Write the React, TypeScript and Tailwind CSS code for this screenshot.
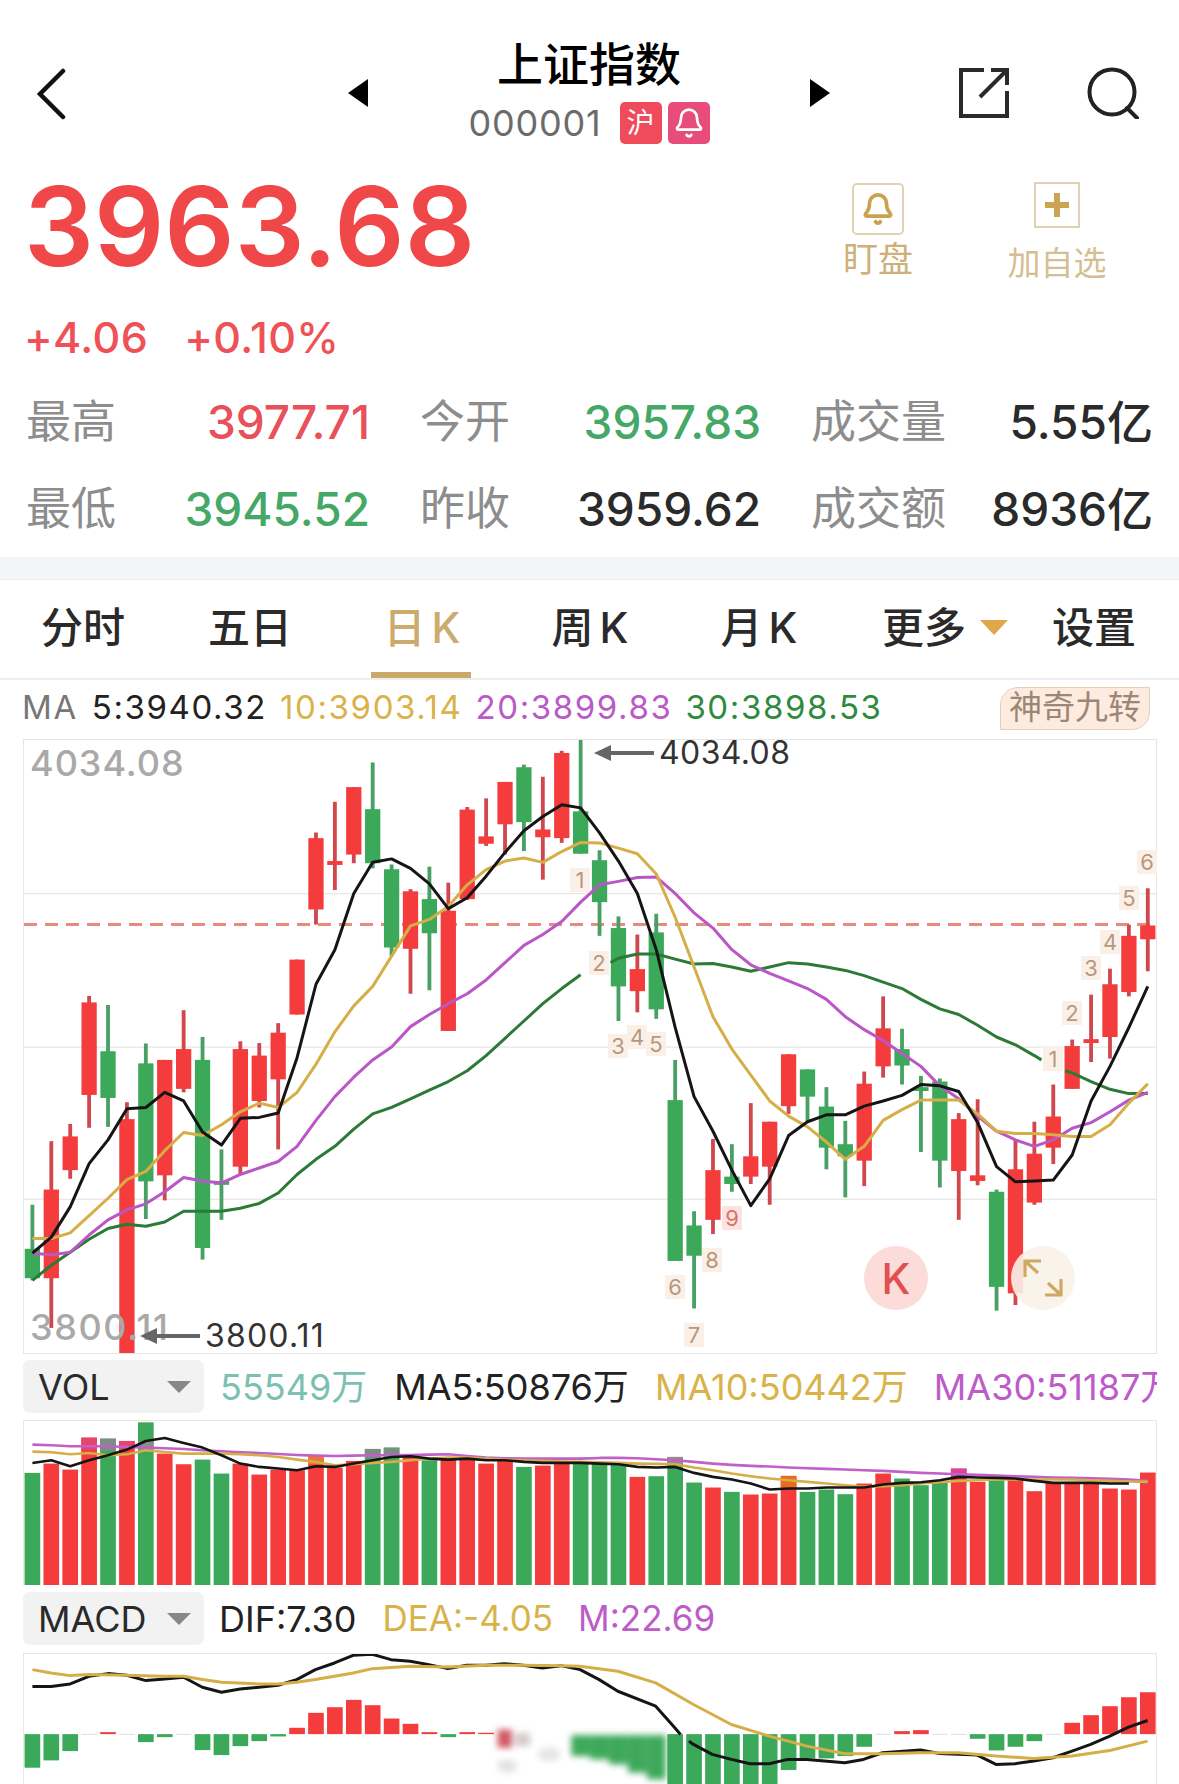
import { Bell } from 'lucide-react';

const RED = '#f43c3c';
const GREEN = '#3ca85a';
const BLACK = '#151515';
const GOLD = '#d6ae48';
const PURPLE = '#b957c6';
const DARK_GREEN = '#2b7a35';

// chart data is kept in a shared horizontal unit, one candle is 49.5 wide
const cx = (i: number) => 82 + 49.5 * i;
const line = (ys: number[], start = 0) => ys.map((y, i) => `${cx(i + start)},${y}`).join(' ');

// color, body top, body bottom, wick top, wick bottom
const CANDLES: [string, number, number, number, number][] = [
  ['g', 1312, 1380, 1210, 1385], ['r', 1175, 1380, 1063, 1495], ['r', 1052, 1130, 1023, 1150], ['r', 742, 956, 727, 1032],
  ['g', 855, 963, 748, 1030], ['r', 1012, 1553, 973, 1553], ['g', 883, 1156, 837, 1243], ['r', 875, 1142, 875, 1200],
  ['r', 850, 942, 760, 950], ['g', 875, 1310, 822, 1337], ['g', 1155, 1162, 1082, 1245], ['r', 850, 1122, 832, 1140],
  ['r', 865, 970, 836, 985], ['r', 812, 920, 790, 1082], ['r', 643, 770, 643, 770], ['r', 362, 527, 349, 562],
  ['r', 415, 420, 278, 482], ['r', 244, 400, 244, 420], ['g', 295, 420, 187, 432], ['g', 434, 615, 423, 635],
  ['r', 485, 618, 480, 722], ['g', 503, 582, 428, 714], ['r', 530, 808, 465, 808], ['r', 296, 503, 290, 505],
  ['r', 358, 375, 270, 380], ['r', 232, 330, 232, 400], ['g', 198, 325, 192, 392], ['r', 342, 360, 220, 458],
  ['r', 165, 362, 160, 373], ['g', 300, 398, 135, 398], ['g', 413, 510, 390, 588], ['g', 570, 705, 543, 785],
  ['r', 665, 716, 585, 765], ['g', 580, 758, 537, 780], ['g', 968, 1340, 875, 1340], ['g', 1258, 1328, 1225, 1450],
  ['r', 1130, 1245, 1058, 1278], ['g', 1145, 1162, 1070, 1180], ['r', 1098, 1145, 975, 1162], ['r', 1018, 1122, 1018, 1210],
  ['r', 862, 982, 862, 1000], ['g', 897, 960, 897, 1020], ['g', 983, 1078, 938, 1128], ['g', 1070, 1098, 1016, 1193],
  ['r', 930, 1108, 902, 1167], ['r', 802, 890, 728, 916], ['g', 850, 888, 803, 932], ['g', 938, 943, 912, 1088],
  ['g', 925, 1108, 918, 1170], ['r', 1012, 1132, 998, 1245], ['r', 1142, 1155, 966, 1165], ['g', 1180, 1400, 1175, 1455],
  ['r', 1128, 1415, 1058, 1442], ['r', 1092, 1205, 1018, 1210], ['r', 1006, 1078, 932, 1116], ['r', 843, 942, 828, 942],
  ['r', 827, 832, 724, 880], ['r', 700, 822, 664, 872], ['r', 588, 718, 562, 728], ['r', 564, 596, 478, 670],
];

const MA5 = [1322, 1285, 1215, 1115, 1060, 988, 985, 950, 970, 1042, 1072, 1010, 1008, 998, 870, 700, 620, 490, 418, 410, 432, 468, 525, 500, 450, 395, 345, 312, 285, 292, 350, 415, 490, 620, 800, 960, 1040, 1130, 1212, 1150, 1050, 1018, 1002, 1002, 982, 970, 957, 932, 935, 948, 1020, 1122, 1157, 1155, 1153, 1095, 970, 890, 800, 705];
const MA10 = [1288, 1288, 1275, 1235, 1195, 1152, 1133, 1085, 1043, 1050, 1025, 995, 975, 985, 950, 885, 810, 750, 705, 635, 565, 550, 520, 470, 435, 415, 408, 418, 393, 372, 373, 385, 398, 445, 545, 660, 775, 850, 910, 970, 1005, 1030, 1065, 1105, 1075, 1015, 990, 968, 968, 968, 1000, 1040, 1045, 1045, 1048, 1052, 1052, 1025, 975, 930];
const MA20 = [1322, 1326, 1320, 1280, 1245, 1222, 1208, 1180, 1147, 1155, 1160, 1140, 1125, 1110, 1075, 1015, 960, 915, 875, 845, 798, 770, 745, 722, 690, 650, 610, 585, 555, 510, 470, 462, 453, 452, 490, 535, 570, 620, 655, 675, 692, 710, 735, 775, 805, 830, 860, 890, 935, 965, 1005, 1040, 1060, 1075, 1060, 1033, 1020, 995, 968, 950];
const MA30_A = [1385, 1350, 1320, 1290, 1265, 1255, 1260, 1250, 1225, 1225, 1225, 1218, 1207, 1183, 1140, 1105, 1075, 1035, 1000, 985, 965, 945, 925, 900, 865, 825, 785, 745, 710, 678];
const MA30_B = [640, 630, 630, 642, 653, 652, 660, 670, 660, 650, 653, 660, 668, 680, 695, 710, 735, 757, 770, 795, 822, 840, 865];
const MA30_C = [905, 925, 943, 953, 953];

// volume bars: color + bar top
const VOL: [string, number][] = [
  ['g', 368], ['r', 340], ['r', 358], ['r', 262], ['g', 265], ['r', 272], ['g', 216], ['r', 310], ['r', 342], ['g', 328],
  ['g', 370], ['r', 340], ['r', 373], ['r', 358], ['r', 360], ['r', 318], ['r', 352], ['r', 332], ['g', 296], ['g', 292],
  ['r', 318], ['g', 330], ['r', 325], ['r', 325], ['r', 340], ['r', 325], ['g', 350], ['r', 346], ['r', 340], ['g', 340],
  ['g', 340], ['g', 342], ['r', 380], ['g', 378], ['g', 320], ['g', 397], ['r', 412], ['g', 425], ['r', 433], ['r', 430],
  ['r', 377], ['g', 425], ['g', 418], ['g', 432], ['r', 400], ['r', 370], ['g', 385], ['g', 405], ['g', 395], ['r', 355],
  ['r', 395], ['g', 390], ['r', 385], ['r', 423], ['r', 398], ['r', 395], ['r', 395], ['r', 415], ['r', 418], ['r', 367],
];
// bar tops that rise over the average lines look tinted in the app
const VOL_TINT: [number, number, number, string][] = [
  [3, 262, 300, '#e8436e'], [4, 265, 302, '#7d8d83'], [5, 272, 298, '#e8436e'], [6, 272, 298, '#84908a'], [15, 318, 342, '#f0762a'],
  [18, 296, 325, '#7d8d83'], [19, 292, 320, '#7d8d83'], [34, 320, 342, '#97898f'], [40, 377, 415, '#ea6a20'], [49, 355, 378, '#d9459a'],
];
const VOL_BLACK = [338, 330, 348, 330, 315, 298, 272, 263, 278, 292, 315, 340, 350, 355, 360, 348, 350, 340, 330, 320, 318, 325, 328, 325, 330, 330, 335, 338, 338, 338, 340, 342, 350, 352, 350, 368, 380, 388, 400, 418, 415, 415, 412, 412, 412, 403, 398, 396, 390, 380, 382, 383, 385, 392, 398, 398, 398, 400, 400];
const VOL_GOLD = [304, 306, 312, 308, 315, 312, 300, 305, 310, 310, 310, 312, 315, 320, 328, 335, 345, 342, 338, 335, 330, 325, 322, 322, 325, 328, 330, 332, 334, 335, 336, 338, 340, 341, 342, 352, 360, 370, 378, 385, 390, 395, 400, 405, 410, 408, 405, 400, 396, 392, 390, 388, 388, 388, 388, 388, 390, 392, 394, 395];
const VOL_PURPLE = [283, 285, 288, 288, 288, 290, 292, 294, 296, 300, 303, 306, 308, 311, 314, 316, 317, 316, 315, 315, 314, 313, 312, 317, 322, 324, 325, 325, 325, 325, 323, 323, 324, 327, 330, 335, 340, 344, 347, 349, 352, 354, 356, 358, 360, 362, 365, 368, 370, 372, 374, 376, 378, 380, 382, 383, 384, 386, 388, 392];

// macd: bar top/bottom around the zero line at 1149
const MACD: [string, number][] = [
  ['g', 1250], ['g', 1228], ['g', 1200], ['n', 1151], ['r', 1143], ['n', 1151], ['g', 1173], ['g', 1158], ['n', 1151], ['g', 1197],
  ['g', 1212], ['g', 1185], ['g', 1170], ['g', 1156], ['r', 1130], ['r', 1085], ['r', 1068], ['r', 1046], ['r', 1062], ['r', 1102],
  ['r', 1118], ['r', 1143], ['g', 1158], ['r', 1143], ['r', 1145], ['x', 0], ['x', 0], ['x', 0], ['x', 0], ['x', 0],
  ['x', 0], ['x', 0], ['x', 0], ['x', 0], ['g', 1310], ['g', 1310], ['g', 1310], ['g', 1310], ['g', 1310], ['g', 1310],
  ['g', 1257], ['g', 1222], ['g', 1222], ['g', 1215], ['g', 1187], ['n', 1151], ['r', 1140], ['r', 1137], ['n', 1151], ['n', 1151],
  ['g', 1163], ['g', 1198], ['g', 1187], ['g', 1170], ['n', 1151], ['r', 1115], ['r', 1092], ['r', 1065], ['r', 1038], ['r', 1023],
];
const MACD_BLUR = [[29, 1215], [30, 1225], [31, 1240], [32, 1265], [33, 1285]];
const DIF = '82,1006 131,1006 181,998 230,975 280,967 329,972 379,988 428,983 478,978 527,1008 577,1023 626,1013 675,1008 725,1002 774,985 823,955 873,935 922,912 972,909 1021,925 1071,930 1120,940 1170,952 1219,942 1269,942 1318,937 1367,942 1417,950 1466,943 1516,955 1566,985 1615,1020 1714,1065 1764,1130 1779,1150';
const DIF_2 = '1801,1170 1813,1180 1862,1210 1912,1225 1961,1238 2011,1238 2060,1225 2110,1225 2209,1235 2258,1225 2308,1205 2407,1197 2457,1207 2556,1212 2605,1240 2655,1238 2704,1230 2754,1220 2804,1200 2853,1180 2903,1155 2952,1128 3002,1108';
const DEA = '82,955 131,965 181,973 230,970 329,972 428,975 478,975 527,985 577,993 675,998 725,998 774,993 823,985 873,975 922,965 972,952 1071,945 1170,947 1269,942 1367,942 1466,943 1516,945 1615,960 1714,995 1813,1060 1912,1120 2011,1155 2110,1185 2209,1208 2308,1208 2407,1205 2506,1205 2605,1215 2704,1222 2804,1215 2903,1198 3002,1170';

const NINE: [string, number, number, boolean?][] = [
  ['1', 579, 879], ['2', 598, 962], ['3', 617, 1045], ['4', 636, 1036], ['5', 655, 1043], ['6', 674, 1286], ['7', 693, 1334],
  ['8', 711, 1259], ['9', 731, 1217, true], ['1', 1052, 1058], ['2', 1071, 1012], ['3', 1090, 967], ['4', 1109, 941], ['5', 1128, 897], ['6', 1146, 861],
];

const STATS = [
  [['最高', '3977.71', 'text-[#e8505a]'], ['今开', '3957.83', 'text-[#45a866]'], ['成交量', '5.55亿', 'text-[#2a2a2a]']],
  [['最低', '3945.52', 'text-[#45a866]'], ['昨收', '3959.62', 'text-[#2a2a2a]'], ['成交额', '8936亿', 'text-[#2a2a2a]']],
];

function Poly({ points, color, width = 3 }: { points: string; color: string; width?: number }) {
  return <polyline points={points} fill="none" stroke={color} strokeWidth={width} strokeLinejoin="round" vectorEffect="non-scaling-stroke" />;
}

function Caret() {
  return <span className="h-0 w-0 border-x-[12px] border-t-[12px] border-x-transparent border-t-[#888]" />;
}

function Arrow() {
  return (
    <svg width="60" height="16" viewBox="0 0 60 16" className="shrink-0">
      <path d="M0 8L17 0V6H60V10H17V16Z" fill="#666" />
    </svg>
  );
}

function CandleChart() {
  return (
    <div className="relative ml-[23px] h-[615px] w-[1134px] border border-[#e6e6e6]">
      <svg viewBox="60 135 2964 1418" preserveAspectRatio="none" className="block h-full w-full">
        {[490, 845, 1197].map(y => <rect key={y} x="60" y={y - 1} width="2964" height="3" fill="#e8e8e8" />)}
        <line x1="60" y1="562" x2="3024" y2="562" stroke="#e98b7c" strokeWidth="3" strokeDasharray="13 8" vectorEffect="non-scaling-stroke" />
        {CANDLES.map(([c, top, bottom, wickTop, wickBottom], i) => (
          <g key={i} fill={c === 'r' ? RED : GREEN}>
            <rect x={cx(i) - 5} y={wickTop} width="10" height={wickBottom - wickTop} fill={c === 'r' ? '#d0484e' : '#48a064'} />
            <rect x={cx(i) - 20} y={top} width="40" height={Math.max(bottom - top, 9)} />
          </g>
        ))}
        <Poly points={line(MA30_A)} color={DARK_GREEN} />
        <Poly points={`1596,650 ${line(MA30_B, 31)} 2724,875`} color={DARK_GREEN} />
        <Poly points={`2786,900 ${line(MA30_C, 55)}`} color={DARK_GREEN} />
        <Poly points={line(MA20)} color={PURPLE} />
        <Poly points={line(MA10)} color={GOLD} />
        <Poly points={line(MA5)} color={BLACK} />
      </svg>

      <span className="absolute left-[6px] top-[5px] text-[36px] leading-[36px] tracking-[1px] font-medium text-[#a9a9a9]">4034.08</span>
      <span className="absolute left-[6px] top-[569px] text-[36px] leading-[36px] tracking-[1.6px] font-medium text-[#a9a9a9]">3800.11</span>
      <div className="absolute left-[570px] top-[-3px] flex items-center gap-[5px] text-[32px] leading-[32px] tracking-[0.4px] text-[#333]">
        <Arrow />
        <span>4034.08</span>
      </div>
      <div className="absolute left-[116px] top-[580px] flex items-center gap-[5px] text-[32px] leading-[32px] tracking-[1.2px] text-[#333]">
        <Arrow />
        <span>3800.11</span>
      </div>

      {NINE.map(([n, x, y, hot], i) => (
        <span
          key={i}
          className={`absolute flex h-[24px] w-[20px] items-center justify-center text-[22px] ${hot ? 'bg-[#fbe3e0] text-[#d9706a]' : 'bg-[#fbf0e8] text-[#b8987c]'}`}
          style={{ left: x - 33, top: y - 751 }}
        >
          {n}
        </span>
      ))}

      <span className="absolute left-[840px] top-[506px] flex h-[64px] w-[64px] items-center justify-center rounded-full bg-[#fbdcd8] text-[42px] font-medium text-[#e0504e]">K</span>
      <span className="absolute left-[987px] top-[506px] flex h-[64px] w-[64px] items-center justify-center rounded-full bg-[#f8f2e8]/90">
        <svg width="42" height="40" viewBox="0 0 42 40" fill="none" stroke="#cfa862" strokeWidth="3.2">
          <path d="M3 19V3H19M3 3L16 15M39 21V37H23M39 37L26 25" />
        </svg>
      </span>
    </div>
  );
}

function VolChart() {
  return (
    <div className="ml-[23px] h-[165px] w-[1134px] border-x border-t border-[#e6e6e6]">
      <svg viewBox="60 212 2964 493" preserveAspectRatio="none" className="block h-full w-full">
        {VOL.map(([c, top], i) => (
          <rect key={i} x={cx(i) - 20.5} y={top} width="41" height={705 - top} fill={c === 'r' ? RED : GREEN} />
        ))}
        {VOL_TINT.map(([i, top, bottom, color]) => (
          <rect key={i} x={cx(i) - 20.5} y={top} width="41" height={bottom - top} fill={color} />
        ))}
        <Poly points={line(VOL_PURPLE)} color="#c060c8" width={2.6} />
        <Poly points={line(VOL_GOLD)} color={GOLD} width={2.6} />
        <Poly points={line(VOL_BLACK)} color={BLACK} width={2.6} />
      </svg>
    </div>
  );
}

function MacdChart() {
  return (
    <div className="ml-[23px] h-[132px] w-[1134px] border-x border-t border-[#e6e6e6]">
      <svg viewBox="60 908 2964 394" preserveAspectRatio="none" className="block h-full w-full">
        <defs>
          <filter id="smear" x="-20%" y="-20%" width="140%" height="140%">
            <feGaussianBlur stdDeviation="9" />
          </filter>
        </defs>
        {MACD.map(([c, edge], i) => {
          if (c === 'x') return null;
          if (c === 'n') return <rect key={i} x={cx(i) - 20} y="1148" width="40" height="3" fill="#dddddd" />;
          const top = c === 'r' ? edge : 1149;
          const height = c === 'r' ? 1149 - edge : edge - 1149;
          return <rect key={i} x={cx(i) - 20.5} y={top} width="41" height={height} fill={c === 'r' ? RED : GREEN} />;
        })}
        <g filter="url(#smear)">
          <rect x="1300" y="1135" width="38" height="55" fill="#cf5a66" />
          <rect x="1345" y="1145" width="40" height="40" fill="#d8c9c9" />
          <ellipse cx="1325" cy="1245" rx="26" ry="20" fill="#e2e2e2" />
          <ellipse cx="1435" cy="1210" rx="30" ry="22" fill="#e6e6e6" />
          {MACD_BLUR.map(([i, bottom]) => (
            <rect key={i} x={cx(i) - 24.5} y="1152" width="49" height={bottom - 1152} fill={GREEN} />
          ))}
        </g>
        <Poly points={DIF} color={BLACK} />
        <Poly points={DIF_2} color={BLACK} />
        <Poly points={DEA} color={GOLD} />
      </svg>
    </div>
  );
}

export default function App() {
  return (
    <div className="relative h-[1784px] w-[1179px] overflow-hidden bg-white font-['Inter','Noto_Sans_CJK_SC',sans-serif]">
      {/* Header */}
      <div className="flex h-[150px] items-start pl-[36px] pt-[43px]">
        <svg width="30" height="52" viewBox="0 0 30 52" fill="none" stroke="#111" strokeWidth="4.5" strokeLinecap="round" className="mt-[25px]">
          <path d="M27 3L4 26L27 49" />
        </svg>
        <span className="ml-[282px] mt-[36px] h-0 w-0 border-y-[14px] border-r-[20px] border-y-transparent border-r-black" />
        <div className="flex w-[442px] flex-col items-center">
          <span className="text-[46px] leading-[42px] font-medium text-black">上证指数</span>
          <div className="mt-[17px] flex items-center">
            <span className="mr-[18px] text-[36px] leading-[42px] tracking-[0.8px] text-[#6b6b6b]">000001</span>
            <span className="flex h-[42px] w-[42px] items-center justify-center rounded-[5px] bg-[#ef4b5a] text-[28px] text-white">沪</span>
            <span className="ml-[6px] flex h-[42px] w-[42px] items-center justify-center rounded-[5px] bg-[#e84c7b] text-white">
              <Bell size={32} strokeWidth={2} />
            </span>
          </div>
        </div>
        <span className="mt-[36px] h-0 w-0 border-y-[14px] border-l-[20px] border-y-transparent border-l-black" />
        <svg width="52" height="52" viewBox="0 0 52 52" fill="none" stroke="#2a2a2a" strokeWidth="4" className="ml-[128px] mt-[24px]">
          <path d="M26 3H3V49H49V24M22 30L47 5M33 3H49V18" />
        </svg>
        <svg width="52" height="52" viewBox="0 0 52 52" fill="none" stroke="#222" strokeWidth="4" strokeLinecap="round" className="ml-[77px] mt-[24px]">
          <circle cx="25" cy="25" r="22.5" />
          <path d="M40 41L50 51" />
        </svg>
      </div>

      {/* Price */}
      <div className="flex h-[150px] items-start pl-[24px]">
        <div className="flex w-[450px] shrink-0 flex-col">
          <span className="mt-[18px] text-[110px] leading-[116px] font-semibold text-[#f04848]">3963.68</span>
          <div className="mt-[31px] flex gap-[36px] text-[43px] leading-[44px] tracking-[0.4px] font-medium text-[#ee5257]">
            <span>+4.06</span>
            <span>+0.10%</span>
          </div>
        </div>
        <div className="ml-[368px] mt-[33px] flex w-[72px] shrink-0 flex-col items-center">
          <span className="flex h-[52px] w-[52px] items-center justify-center rounded-[5px] border-2 border-[#e0d3b4] text-[#c9a24f]">
            <Bell size={34} strokeWidth={2.6} />
          </span>
          <span className="mt-[6px] text-[35px] leading-[36px] text-[#cdb07a]">盯盘</span>
        </div>
        <div className="ml-[93px] mt-[32px] flex w-[100px] shrink-0 flex-col items-center">
          <span className="flex h-[46px] w-[46px] items-center justify-center border-2 border-[#e0d3b4]">
            <span className="relative h-[24px] w-[24px]">
              <span className="absolute left-[9px] top-0 h-[24px] w-[6px] bg-[#cba552]" />
              <span className="absolute left-0 top-[9px] h-[6px] w-[24px] bg-[#cba552]" />
            </span>
          </span>
          <span className="mt-[18px] text-[33px] leading-[34px] text-[#d5bf92]">加自选</span>
        </div>
      </div>

      {/* Quote table */}
      <div className="mt-[99px] flex flex-col gap-[41px]">
        {STATS.map((row, r) => (
          <div key={r} className="grid h-[46px] grid-cols-[344px_341px_342px] gap-x-[50px] pl-[26px]">
            {row.map(([label, value, color]) => (
              <div key={label} className="flex items-center justify-between">
                <span className="text-[45px] leading-[46px] text-[#8d8d8d]">{label}</span>
                <span className={`text-[46px] leading-[46px] font-medium ${color}`}>{value}</span>
              </div>
            ))}
          </div>
        ))}
      </div>

      <div className="mt-[25px] h-[23px] border-b border-[#eeeeee] bg-[#f4f5f7]" />

      {/* Tabs */}
      <div className="flex h-[100px] border-b-2 border-[#eeeeee] pb-[4px] text-[42px] font-medium text-[#2a2a2a]">
        <div className="flex w-[166px] items-center justify-center">分时</div>
        <div className="flex w-[168px] items-center justify-center">五日</div>
        <div className="relative flex w-[176px] items-center justify-center gap-[6px] text-[#cbab6e]">
          <span>日</span><span>K</span>
          <span className="absolute bottom-[-4px] left-[37px] h-[6px] w-[100px] bg-[#c9a86a]" />
        </div>
        <div className="flex w-[160px] items-center justify-center gap-[6px]"><span>周</span><span>K</span></div>
        <div className="flex w-[178px] items-center justify-center gap-[6px]"><span>月</span><span>K</span></div>
        <div className="flex w-[194px] items-center justify-center gap-[14px]">
          <span>更多</span>
          <span className="h-0 w-0 border-x-[14px] border-t-[15px] border-x-transparent border-t-[#dfa64a]" />
        </div>
        <div className="flex w-[104px] items-center justify-center">设置</div>
      </div>

      {/* MA legend */}
      <div className="flex h-[59px] items-center pb-[3px] pl-[22px] pr-[29px] text-[33px] tracking-[1.6px]">
        <span className="text-[#777]">MA</span>
        <span className="ml-[14px] text-[#222]">5:3940.32</span>
        <span className="ml-[13px] text-[#d9b34a]">10:3903.14</span>
        <span className="ml-[13px] text-[#b95ac6]">20:3899.83</span>
        <span className="ml-[13px] text-[#2f8a3e]">30:3898.53</span>
        <span className="ml-auto flex h-[43px] w-[150px] items-center justify-center rounded-bl-none rounded-br-[18px] rounded-tl-[18px] rounded-tr-none border border-[#e6cfba] bg-[#fdebdf] text-[33px] tracking-normal text-[#9c8676]">
          神奇九转
        </span>
      </div>

      <CandleChart />

      {/* VOL legend */}
      <div className="flex h-[66px] w-[1157px] items-center overflow-hidden pb-[1px] pl-[23px] text-[36px] whitespace-nowrap">
        <div className="flex h-[53px] w-[181px] shrink-0 items-center justify-between rounded-[7px] bg-[#f2f2f2] pl-[15px] pr-[13px] text-[#2a2a2a]">
          <span>VOL</span>
          <Caret />
        </div>
        <span className="ml-[16px] shrink-0 text-[#7cc0b2]">55549万</span>
        <span className="ml-[27px] shrink-0 text-[#222]">MA5:50876万</span>
        <span className="ml-[26px] shrink-0 text-[#d9b34a]">MA10:50442万</span>
        <span className="ml-[26px] shrink-0 text-[#bd5cc8]">MA30:51187万</span>
      </div>

      <VolChart />

      {/* MACD legend */}
      <div className="flex h-[68px] items-center pb-[1px] pl-[23px] text-[36px] whitespace-nowrap">
        <div className="flex h-[53px] w-[181px] items-center justify-between rounded-[7px] bg-[#f2f2f2] pl-[15px] pr-[13px] text-[#2a2a2a]">
          <span>MACD</span>
          <Caret />
        </div>
        <span className="ml-[15px] text-[#222]">DIF:7.30</span>
        <span className="ml-[26px] text-[35px] text-[#d9b34a]">DEA:-4.05</span>
        <span className="ml-[25px] text-[35px] text-[#bd5cc8]">M:22.69</span>
      </div>

      <MacdChart />
    </div>
  );
}
